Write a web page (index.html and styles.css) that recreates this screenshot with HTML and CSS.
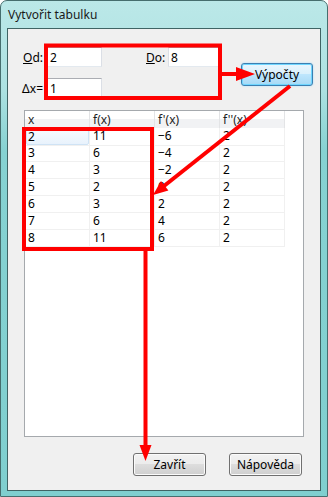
FILE: index.html
```html
<!DOCTYPE html>
<html lang="cs">
<head>
    <meta charset="UTF-8">
    <meta name="viewport" content="width=device-width, initial-scale=1.0">
    <title>Vytvořit tabulku</title>
    <link rel="stylesheet" href="styles.css">
</head>
<body>
    <div class="window">
        <div class="titlebar">Vytvořit tabulku</div>
        <div class="client">
            <div class="top">
                <div class="fields">
                    <div class="row">
                        <label class="lbl" for="od"><u>O</u>d:</label>
                        <input class="field" type="text" id="od" value="2">
                        <label class="lbl lbl-do" for="do"><u>D</u>o:</label>
                        <input class="field field-do" type="text" id="do" value="8">
                    </div>
                    <div class="row row-dx">
                        <label class="lbl" for="dx">Δx=</label>
                        <input class="field" type="text" id="dx" value="1">
                    </div>
                </div>
                <button type="button" class="btn btn-default">Výpočty</button>
            </div>

            <div class="list">
                <div class="list-head">
                    <div class="hcell">x</div>
                    <div class="hcell">f(x)</div>
                    <div class="hcell">f'(x)</div>
                    <div class="hcell">f''(x)</div>
                </div>
                <div class="list-row">
                    <div class="cell"><span class="focus">2</span></div><div class="cell">11</div><div class="cell">−6</div><div class="cell">2</div>
                </div>
                <div class="list-row">
                    <div class="cell">3</div><div class="cell">6</div><div class="cell">−4</div><div class="cell">2</div>
                </div>
                <div class="list-row">
                    <div class="cell">4</div><div class="cell">3</div><div class="cell">−2</div><div class="cell">2</div>
                </div>
                <div class="list-row">
                    <div class="cell">5</div><div class="cell">2</div><div class="cell">0</div><div class="cell">2</div>
                </div>
                <div class="list-row">
                    <div class="cell">6</div><div class="cell">3</div><div class="cell">2</div><div class="cell">2</div>
                </div>
                <div class="list-row">
                    <div class="cell">7</div><div class="cell">6</div><div class="cell">4</div><div class="cell">2</div>
                </div>
                <div class="list-row">
                    <div class="cell">8</div><div class="cell">11</div><div class="cell">6</div><div class="cell">2</div>
                </div>
            </div>

            <div class="actions">
                <button type="button" class="btn">Zavřít</button>
                <button type="button" class="btn">Nápověda</button>
            </div>
        </div>

        <!-- red annotation marks drawn over the dialog -->
        <svg class="marks" width="328" height="497" viewBox="0 0 328 497">
            <g fill="none" stroke="#ff0000" stroke-width="4">
                <rect x="46" y="45.5" width="174" height="52.5"/>
                <rect x="24" y="129" width="128" height="120"/>
                <line x1="222" y1="74" x2="238" y2="74"/>
                <line x1="290" y1="86" x2="164" y2="186"/>
                <line x1="145.5" y1="251" x2="145.5" y2="447"/>
            </g>
            <g fill="#ff0000">
                <polygon points="236,67 255,74 236,81"/>
                <polygon points="153,195 168.4,190.4 161,181"/>
                <polygon points="139.5,445 151.5,445 145.5,461"/>
            </g>
        </svg>
    </div>
</body>
</html>
```

FILE: styles.css
```css
body {
    margin: 0;
    padding: 0;
    background-color: #ffffff;
    font-family: "Noto Sans", "Liberation Sans", sans-serif;
    font-size: 12px;
    color: #000;
}
.window {
    position: relative;
    width: 328px;
    height: 497px;
    box-sizing: border-box;
    border: 1px solid #466e6e;
    border-radius: 7px 7px 0 0;
    background: linear-gradient(to bottom, #bbe8e8 0, #ace1e1 90px, #86d2d2 150px, #7fcfcf 100%);
    display: flex;
    flex-direction: column;
}
.titlebar {
    height: 27px;
    padding-left: 7px;
    display: flex;
    align-items: center;
    color: #1a1a1a;
    font-size: 12px;
}
.client {
    flex: 1;
    margin: 0 6px 5px 6px;
    border: 1px solid #3f6464;
    background-color: #f0f0f0;
    display: flex;
    flex-direction: column;
}

/* top fields */
.top {
    display: flex;
    align-items: flex-start;
    padding: 18px 0 0 12px;
}
.row {
    display: flex;
    align-items: center;
    height: 20px;
}
.row-dx {
    margin-top: 11px;
}
.lbl {
    width: 27px;
    padding-right: 4px;
    box-sizing: border-box;
    text-align: right;
}
.lbl-do {
    width: 22px;
    margin-left: 44px;
    padding-right: 0;
    text-align: left;
}
.field {
    width: 55px;
    height: 20px;
    box-sizing: border-box;
    margin: 0;
    padding: 0 2px;
    font-family: "Noto Sans", "Liberation Sans", sans-serif;
    font-size: 12px;
    color: #000;
    background: #fff;
    border: 1px solid #dbdfe6;
    border-top-color: #abadb3;
    border-bottom-color: #e3e9ef;
    outline: none;
}
.field-do {
    width: 52px;
}

/* buttons */
.btn {
    width: 73px;
    height: 23px;
    box-sizing: border-box;
    padding: 0;
    font-family: "Noto Sans", "Liberation Sans", sans-serif;
    font-size: 12px;
    color: #000;
    border: 1px solid #707070;
    border-radius: 3px;
    background: linear-gradient(to bottom, #f2f2f2 0, #ebebeb 50%, #dddddd 50%, #cfcfcf 100%);
    box-shadow: inset 0 0 0 1px #fbfbfb;
}
.btn-default {
    width: 72px;
    margin: 16px 0 0 21px;
    border-color: #3c7fb1;
    background: linear-gradient(to bottom, #eaf6fd 0, #d9f0fc 50%, #bee6fd 50%, #a7d9f5 100%);
    box-shadow: inset 0 0 0 1px #6fd6ff, 0 0 2px #9fdcff;
}

/* list view */
.list {
    margin: 12px 0 0 16px;
    width: 280px;
    height: 327px;
    box-sizing: border-box;
    border: 1px solid #a5a9ad;
    background: #fff;
}
.list-head,
.list-row {
    display: grid;
    grid-template-columns: repeat(4, 65px);
}
.list-head {
    height: 17px;
}
.hcell {
    box-sizing: border-box;
    padding-left: 3px;
    line-height: 17px;
    border-right: 1px solid #e3e4e6;
    background: linear-gradient(to bottom, #ffffff 0, #ffffff 45%, #f1f2f4 50%, #f1f2f4 100%);
    color: #1e1e1e;
}
.list-row {
    height: 17px;
}
.cell {
    box-sizing: border-box;
    padding-left: 3px;
    line-height: 16px;
    border-right: 1px solid #f0f0f0;
    border-bottom: 1px solid #f0f0f0;
}
.cell .focus {
    display: block;
    margin-left: -2px;
    padding-left: 1px;
    height: 15px;
    line-height: 15px;
    border: 1px solid #cfe3f5;
    border-radius: 2px;
    background: linear-gradient(to bottom, #f8fbfe, #e8f2fc);
}

/* bottom buttons */
.actions {
    display: flex;
    justify-content: flex-end;
    gap: 23px;
    margin-top: 16px;
    padding-right: 18px;
}

.marks {
    position: absolute;
    top: -1px;
    left: -1px;
    pointer-events: none;
}
```
